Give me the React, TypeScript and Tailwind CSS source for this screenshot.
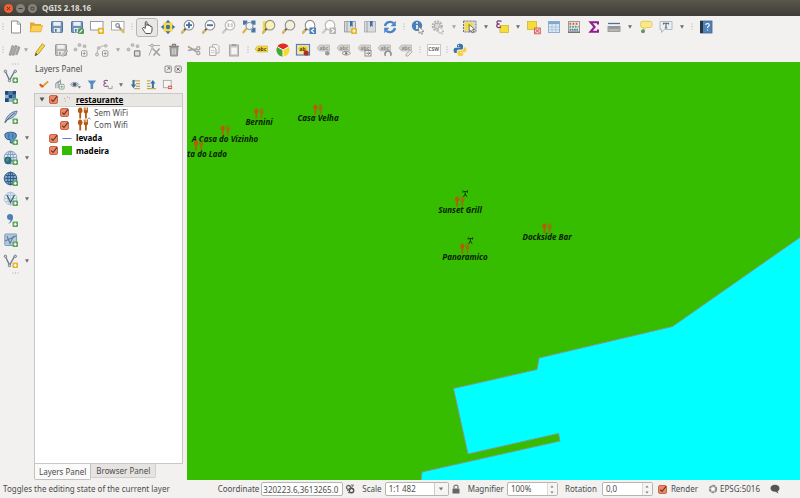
import React from "react";

type Kids = { children?: React.ReactNode };

/* ---------- shared pieces ---------- */

function Svg({ children }: Kids) {
  return (
    <svg viewBox="0 0 16 16" className="h-4 w-4 shrink-0" fill="none" aria-hidden="true">
      {children}
    </svg>
  );
}

function Tool({ label, active, children }: Kids & { label: string; active?: boolean }) {
  return (
    <button
      type="button"
      aria-label={label}
      aria-pressed={active}
      className={
        active
          ? "flex h-[19px] min-w-0 flex-1 items-center justify-center rounded-[3px] border border-[#b9b6b2] bg-[#e9e7e5]"
          : "flex h-[19px] min-w-0 flex-1 items-center justify-center"
      }
    >
      <Svg>{children}</Svg>
    </button>
  );
}

function Arrow({ narrow, light }: { narrow?: boolean; light?: boolean }) {
  return (
    <button
      type="button"
      aria-label="More options"
      className={narrow ? "flex w-2 shrink-0 justify-center" : "flex w-3 shrink-0 justify-center"}
    >
      <svg viewBox="0 0 6 4" className="h-1 w-1.5" aria-hidden="true">
        <path d="M1 0.3H5L3 3.7Z" fill={light ? "#a5a3a0" : "#6f6d6a"} />
      </svg>
    </button>
  );
}

function Grip({ small }: { small?: boolean }) {
  return (
    <div className={small ? "flex w-1.5 shrink-0 justify-center" : "flex w-2 shrink-0 justify-center"}>
      <svg viewBox="0 0 4 8" className="h-2 w-1" aria-hidden="true">
        <path d="M1 1H3M1 3.5H3M1 6H3" stroke="#cfccc8" strokeWidth="1" />
      </svg>
    </div>
  );
}

/* Small green or yellow "add" badge in the lower right corner. */
function Plus({ color = "#5aa35a" }: { color?: string }) {
  return (
    <g>
      <rect x="9.5" y="9.5" width="5.5" height="5.5" rx="1" fill={color} />
      <path d="M12.25 10.7v3.1M10.7 12.25h3.1" stroke="#fff" strokeWidth="1.2" />
    </g>
  );
}

function Lens({ fill = "#fdfdfd", muted }: { fill?: string; muted?: boolean }) {
  return (
    <g>
      <path d="M5.6 9.8L2 13.6" stroke={muted ? "#b9b7b4" : "#5b5b5b"} strokeWidth="2" strokeLinecap="round" />
      <path d="M3.8 11.6L1.8 13.8" stroke={muted ? "#cfcdca" : "#e9c33c"} strokeWidth="1.6" strokeLinecap="round" />
      <circle cx="9" cy="6.2" r="4.8" fill={fill} stroke={muted ? "#b5b3b0" : "#8d8d8d"} strokeWidth="1.1" />
    </g>
  );
}

function Floppy({ color, edge }: { color: string; edge: string }) {
  return (
    <g>
      <rect x="2.5" y="2.5" width="11" height="11" rx="0.8" fill={color} stroke={edge} />
      <rect x="4.3" y="2.8" width="7.4" height="4" fill="#eef0f2" />
      <rect x="4.8" y="9" width="6.4" height="4.4" fill="#e3e6e9" />
      <rect x="6" y="10" width="1.6" height="2.8" fill={edge} />
    </g>
  );
}

function Nodes() {
  return (
    <g fill="#c4c2bf" stroke="#a09e9b" strokeWidth="0.6">
      <circle cx="2.5" cy="7.5" r="1.5" />
      <circle cx="6.5" cy="3" r="1.5" />
      <circle cx="11.5" cy="4.2" r="1.5" />
    </g>
  );
}

function GreyPlus() {
  return (
    <g>
      <rect x="8.5" y="8.8" width="5.4" height="5.4" rx="0.8" fill="#fff" stroke="#9a9895" />
      <path d="M11.2 10v3M9.7 11.5h3" stroke="#9a9895" />
    </g>
  );
}

function Tag({ muted }: { muted?: boolean }) {
  return (
    <g>
      <path
        d="M1 6L3.5 3H13.5V9H3.5Z"
        fill={muted ? "#d5d3d0" : "#f4d742"}
        stroke={muted ? "#b3b1ae" : "#d7b82d"}
        strokeWidth="0.7"
      />
      <text
        x="3.6"
        y="7.8"
        fontSize="5"
        fontWeight="700"
        fontFamily="Noto Sans, sans-serif"
        fill={muted ? "#8c8a87" : "#4b431a"}
      >
        abc
      </text>
    </g>
  );
}

function Vee({ color = "#6f7d86" }: { color?: string }) {
  return (
    <g stroke={color}>
      <path d="M2.5 3.5L6.5 12.3L11.5 3.5H13" strokeWidth="1.4" />
      <circle cx="2.4" cy="3.3" r="1.2" fill="#cfe0ef" />
      <circle cx="6.5" cy="12.5" r="1.2" fill="#cfe0ef" />
      <circle cx="12.3" cy="3.3" r="1.2" fill="#cfe0ef" />
    </g>
  );
}

function Globe({ color = "#3d6f9e", fill = "#b9d0e4" }: { color?: string; fill?: string }) {
  return (
    <g stroke={color} strokeWidth="0.9">
      <circle cx="7.5" cy="7.5" r="6.3" fill={fill} />
      <ellipse cx="7.5" cy="7.5" rx="2.8" ry="6.3" />
      <path d="M1.5 7.5H13.5M2.6 4.5H12.4M2.6 10.5H12.4M7.5 1.5V13.5" />
    </g>
  );
}

function Check({ label, children }: Kids & { label?: string }) {
  return (
    <label className="flex items-center gap-1">
      <span className="grid h-[9px] w-[9px] shrink-0">
        <input
          type="checkbox"
          defaultChecked
          aria-label={label}
          className="col-start-1 row-start-1 h-[9px] w-[9px] appearance-none rounded-[2px] border border-[#c4694c] bg-white checked:bg-[#f08763] peer"
        />
        <svg
          viewBox="0 0 9 9"
          className="pointer-events-none col-start-1 row-start-1 hidden h-[9px] w-[9px] peer-checked:block"
          fill="none"
          aria-hidden="true"
        >
          <path d="M2.2 4.6L4 6.5L8 1.4" stroke="#54382f" strokeWidth="1.1" />
        </svg>
      </span>
      {children}
    </label>
  );
}

function Cutlery({ className, spoon = "#b5590f", fork = "#b5590f" }: { className: string; spoon?: string; fork?: string }) {
  return (
    <svg viewBox="0 0 12 12" className={className} aria-hidden="true">
      <path d="M3.2 0.5C4.8 0.5 5.5 2.2 5.5 3.5C5.5 4.8 4.9 5.7 4.1 6.1V11.5H2.3V6.1C1.5 5.7 0.9 4.8 0.9 3.5C0.9 2.2 1.6 0.5 3.2 0.5Z" fill={spoon} />
      <path d="M6.8 0.5H7.7V3.2H8.4V0.5H9.4V3.2H10.1V0.5H11V4.6C11 5.7 10.4 6.2 9.8 6.4V11.5H8V6.4C7.4 6.2 6.8 5.7 6.8 4.6Z" fill={fork} />
    </svg>
  );
}

/* ---------- window chrome ---------- */

function TitleBar() {
  return (
    <header className="flex h-4 items-center gap-[3px] bg-linear-to-b from-[#5a574e] to-[#3d3c37] pl-1">
      <button type="button" aria-label="Close" className="flex h-[9px] w-[9px] items-center justify-center rounded-full bg-[#ee5f35]">
        <svg viewBox="0 0 5 5" className="h-[5px] w-[5px]" aria-hidden="true">
          <path d="M1 1L4 4M4 1L1 4" stroke="#6b2a17" />
        </svg>
      </button>
      <button type="button" aria-label="Minimize" className="flex h-[9px] w-[9px] items-center justify-center rounded-full bg-[#85827a]">
        <svg viewBox="0 0 5 5" className="h-[5px] w-[5px]" aria-hidden="true">
          <path d="M0.5 2.5H4.5" stroke="#3d3c37" />
        </svg>
      </button>
      <button type="button" aria-label="Maximize" className="flex h-[9px] w-[9px] items-center justify-center rounded-full bg-[#85827a]">
        <svg viewBox="0 0 5 5" className="h-[5px] w-[5px]" fill="none" aria-hidden="true">
          <path d="M1 1.2H4V3.8H1Z" stroke="#3d3c37" strokeWidth="0.8" />
        </svg>
      </button>
      <h1 className="pl-0.5 text-[8px] leading-4 font-bold text-[#dfdbd2]">QGIS 2.18.16</h1>
    </header>
  );
}

function MainToolbar() {
  return (
    <div role="toolbar" aria-label="Main toolbar" className="flex h-[22px] items-center">
      <Grip small />
      <div className="flex w-[122px] items-center">
        <Tool label="New project">
          <path d="M3.5 2H9.5L12.5 5V14H3.5Z" fill="#fff" stroke="#8b8b8b" />
          <path d="M9.3 2V5.2H12.5" stroke="#8b8b8b" strokeWidth="0.8" />
        </Tool>
        <Tool label="Open project">
          <path d="M2 12.5V3.5H6L7 5H13V12.5Z" fill="#e2a92f" />
          <path d="M2 12.8L4 6.5H14.6L12.8 12.8Z" fill="#fbcf54" stroke="#e0ab35" strokeWidth="0.7" />
        </Tool>
        <Tool label="Save project"><Floppy color="#6e94bd" edge="#4f759e" /></Tool>
        <Tool label="Save project as">
          <Floppy color="#6e94bd" edge="#4f759e" />
          <rect x="9" y="9.5" width="6" height="5.5" rx="1" fill="#4e9a57" />
          <path d="M10.5 13.6L13.4 10.7" stroke="#fff" strokeWidth="1.1" />
        </Tool>
        <Tool label="New print composer">
          <rect x="1.5" y="2.5" width="12.5" height="8.5" fill="#fff" stroke="#9a9a9a" />
          <rect x="8.8" y="8.8" width="6.2" height="6.2" rx="1" fill="#e3b52a" />
          <path d="M11.9 10.2v3.4M10.2 11.9h3.4" stroke="#fff" strokeWidth="1.2" />
        </Tool>
        <Tool label="Composer manager">
          <rect x="1.5" y="2.5" width="12.5" height="8.5" fill="#fff" stroke="#a8a8a8" />
          <path d="M8.2 7.2L13.8 13.4" stroke="#8a8a8a" strokeWidth="2" />
          <path d="M11 10.2L14.2 13.8" stroke="#e5c445" strokeWidth="1.8" />
          <circle cx="7.6" cy="6.5" r="1.8" stroke="#8a8a8a" strokeWidth="1.2" />
        </Tool>
      </div>
      <Grip />
      <div className="flex w-[264px] items-center">
        <Tool label="Pan map" active>
          <path
            d="M6.3 9.3V3.4C6.3 2.2 8 2.2 8 3.4V6.6V5.8C8.2 4.8 9.8 5 9.8 6V7C10 6 11.5 6.2 11.5 7.2V7.9C11.8 7 13 7.3 13 8.3V11C13 12.5 12 14.5 11.5 14.5H6.8C6 13.5 4.5 11.3 3.6 9.9C3 8.9 4.4 8 5.2 8.8Z"
            fill="#fff"
            stroke="#3c3c3c"
            strokeWidth="0.9"
          />
        </Tool>
        <Tool label="Pan map to selection">
          <rect x="3.5" y="3.5" width="9" height="9" fill="#f3dc46" />
          <path d="M8 0.8L10.5 3.8H5.5ZM8 15.2L10.5 12.2H5.5ZM0.8 8L3.8 5.5V10.5ZM15.2 8L12.2 5.5V10.5Z" fill="#4a6f9c" />
          <circle cx="8" cy="8" r="2.2" fill="#4a6f9c" />
        </Tool>
        <Tool label="Zoom in">
          <Lens />
          <path d="M9 3.2V9.2M6 6.2H12" stroke="#3f6ea5" strokeWidth="1.8" />
        </Tool>
        <Tool label="Zoom out">
          <Lens />
          <path d="M6 6.2H12" stroke="#3f6ea5" strokeWidth="1.8" />
        </Tool>
        <Tool label="Zoom to native resolution">
          <Lens muted />
          <path d="M7.2 4.2V8.2M11 4.2V8.2M9 4.8V5.6M9 6.9V7.7" stroke="#9a9895" strokeWidth="0.9" />
        </Tool>
        <Tool label="Zoom full">
          <path d="M5.5 9.5L1.8 14" stroke="#d8b53c" strokeWidth="2" />
          <circle cx="8.5" cy="7" r="3.6" fill="#eef3f8" stroke="#8d8d8d" />
          <path d="M2 1.5H6.3V3.6L4.2 5.8H2ZM14.5 1.5H10.3V3.6L12.3 5.8H14.5ZM14.5 13.5H10.3V11L12.3 8.8H14.5Z" fill="#4a76a8" />
        </Tool>
        <Tool label="Zoom to selection">
          <rect x="1.8" y="2" width="7" height="9" fill="#f3dc46" />
          <Lens fill="#f9f1b5" />
        </Tool>
        <Tool label="Zoom to layer"><Lens fill="#f3f0dc" /></Tool>
        <Tool label="Zoom last">
          <Lens />
          <rect x="8.5" y="8.5" width="6.5" height="6.5" fill="#4f81b5" />
          <path d="M13 9.8L10.5 11.8L13 13.7" stroke="#fff" strokeWidth="1.2" />
        </Tool>
        <Tool label="Zoom next">
          <Lens muted />
          <rect x="8.5" y="8.5" width="6.5" height="6.5" fill="#b7b5b2" />
          <path d="M10.5 9.8L13 11.8L10.5 13.7" stroke="#fff" strokeWidth="1.2" />
        </Tool>
        <Tool label="New bookmark">
          <path d="M2.5 2.5H13.5V13H2.5Z" fill="#d9dcdf" stroke="#8d9297" strokeWidth="0.8" />
          <path d="M5 2.5V13" stroke="#8d9297" strokeWidth="0.8" />
          <path d="M8 2V8L9.3 6.8L10.6 8V2Z" fill="#3f6ea5" />
          <rect x="9" y="9" width="6" height="6" rx="1" fill="#e3b52a" />
          <path d="M12 10.3v3.4M10.3 12h3.4" stroke="#fff" strokeWidth="1.1" />
        </Tool>
        <Tool label="Show bookmarks">
          <path d="M2.5 2.5H13.5V13H2.5Z" fill="#d9dcdf" stroke="#a3a7ab" strokeWidth="0.8" />
          <path d="M5 2.5V13" stroke="#8d9297" strokeWidth="0.8" />
          <path d="M8 2V8L9.3 6.8L10.6 8V2Z" fill="#3f6ea5" />
        </Tool>
        <Tool label="Refresh">
          <path d="M3 7A5.2 5.2 0 0 1 11.5 4.2" stroke="#4a86c0" strokeWidth="2.4" />
          <path d="M13.8 1.8V7.2H8.6Z" fill="#4a86c0" />
          <path d="M13 9A5.2 5.2 0 0 1 4.5 11.8" stroke="#4a86c0" strokeWidth="2.4" />
          <path d="M2.2 14.2V8.8H7.4Z" fill="#4a86c0" />
        </Tool>
      </div>
      <Grip />
      <div className="flex w-10 items-center">
        <Tool label="Identify features">
          <circle cx="7" cy="6.8" r="5.2" fill="#4a80b8" />
          <path d="M7 6V10" stroke="#fff" strokeWidth="1.6" />
          <circle cx="7" cy="3.9" r="0.9" fill="#fff" />
          <path d="M8.5 7.5L14 12.4L11.7 12.6L12.7 14.8L11.5 15.2L10.5 13L9 14.4Z" fill="#fff" stroke="#777" strokeWidth="0.7" />
        </Tool>
        <Tool label="Run feature action">
          <circle cx="7.3" cy="7" r="4.6" stroke="#b3b1ae" strokeWidth="2" strokeDasharray="2 1" />
          <circle cx="7.3" cy="7" r="3" fill="#dcdad8" stroke="#aaa8a5" />
          <path d="M8.5 7.5L14 12.4L11.7 12.6L12.7 14.8L11.5 15.2L10.5 13L9 14.4Z" fill="#fff" stroke="#a9a7a4" strokeWidth="0.7" />
        </Tool>
      </div>
      <Arrow light />
      <div className="flex w-5 items-center">
        <Tool label="Select features">
          <rect x="1.5" y="2" width="12.5" height="11" fill="#d9d9d4" stroke="#747474" strokeDasharray="2 1" />
          <path d="M3 3.5H10.5V7.5L7 11.5H3Z" fill="#f6dd3b" />
          <path d="M7 5.5L12.8 10.4L10.5 10.7L11.8 13.2L10.4 13.8L9.2 11.4L7.4 12.8Z" fill="#fff" stroke="#555" strokeWidth="0.8" />
        </Tool>
      </div>
      <Arrow />
      <div className="flex w-5 items-center">
        <Tool label="Select by expression">
          <rect x="6" y="6.5" width="8.5" height="7" fill="#f6dd3b" stroke="#d3b62c" strokeWidth="0.8" />
          <path d="M7.5 2.3C5 1.2 2.5 2 3 3.8C3.2 4.8 4.5 5 5.6 5C3.8 5 2.3 5.8 2.8 7.4C3.3 9 5.8 8.8 7 7.8" stroke="#7a3d74" strokeWidth="1.3" />
        </Tool>
      </div>
      <Arrow />
      <div className="flex w-[100px] items-center">
        <Tool label="Deselect features">
          <rect x="1.5" y="2.5" width="9" height="8" fill="#f6dd3b" stroke="#d3b62c" strokeWidth="0.8" />
          <rect x="8.5" y="9" width="5.8" height="5.8" fill="#f3d0cb" stroke="#d5564b" strokeWidth="0.9" />
          <path d="M9.5 10L13.3 13.8M13.3 10L9.5 13.8" stroke="#d5564b" />
        </Tool>
        <Tool label="Open attribute table">
          <rect x="2.5" y="2.5" width="11" height="11" fill="#e3ebf3" stroke="#8db0d2" />
          <rect x="2.5" y="2.5" width="11" height="2.6" fill="#7fa8d0" />
          <path d="M6 5V13.5M9.8 5V13.5M3 8H13M3 10.8H13" stroke="#9fbcd8" strokeWidth="0.8" />
        </Tool>
        <Tool label="Open field calculator">
          <rect x="2.5" y="2.5" width="11" height="10.5" fill="#eceae6" stroke="#9b9791" />
          <path d="M2 13.3H14" stroke="#77736d" strokeWidth="1.4" />
          <path d="M3.5 4.8H12.5" stroke="#d9534a" strokeWidth="1.9" strokeDasharray="1.7 1.4" />
          <path d="M3.5 7.8H12.5" stroke="#59a75b" strokeWidth="1.9" strokeDasharray="1.7 1" />
          <path d="M3.5 10.8H12.5" stroke="#4d7fb5" strokeWidth="1.9" strokeDasharray="1.7 0.6" />
        </Tool>
        <Tool label="Show statistical summary">
          <path d="M12 5.5V3.2H4.5L8.6 8L4.5 12.8H12V10.5" stroke="#8d1f8e" strokeWidth="2" />
        </Tool>
        <Tool label="Measure line">
          <path d="M2 4.5H14" stroke="#4c7296" strokeWidth="1.3" />
          <rect x="2" y="7.5" width="12" height="4.8" fill="#b9b9b7" stroke="#858583" strokeWidth="0.8" />
          <path d="M4 8V10M6 8V10M8 8V10M10 8V10M12 8V10" stroke="#666" strokeWidth="0.8" />
        </Tool>
      </div>
      <Arrow />
      <div className="flex w-10 items-center">
        <Tool label="Map tips">
          <path d="M4 2.3H12.5C14.6 2.3 14.6 8.5 12.5 8.5H8L5.5 12L5.8 8.5H4C1.8 8.5 1.8 2.3 4 2.3Z" fill="#fbe889" stroke="#d9c04f" strokeWidth="0.8" />
          <circle cx="5" cy="12.3" r="2" fill="#5d9a5f" />
        </Tool>
        <Tool label="Text annotation">
          <path d="M2 2.5H14V10.5H6.5L3.5 13.5V10.5H2Z" fill="#eaf0f5" stroke="#a7b4bf" strokeWidth="0.9" />
          <path d="M5.5 5.5V4.2H10.5V5.5M8 4.2V8.8M6.8 9H9.2" stroke="#5f5f5f" strokeWidth="1.1" />
        </Tool>
      </div>
      <Arrow />
      <Grip />
      <div className="flex w-5 items-center">
        <Tool label="Help contents">
          <rect x="2.5" y="2" width="11.5" height="12" fill="#5183b8" stroke="#3b648f" strokeWidth="0.8" />
          <rect x="2" y="2" width="3" height="12" fill="#263645" />
          <path d="M7.8 6C7.8 4 11.2 4 11.2 6C11.2 7.4 9.5 7.4 9.5 9M9.5 10.4V11.6" stroke="#fff" strokeWidth="1.2" />
        </Tool>
      </div>
    </div>
  );
}

function EditToolbar() {
  return (
    <div role="toolbar" aria-label="Editing toolbar" className="flex h-6 items-center">
      <Grip small />
      <div className="flex w-4 items-center">
        <Tool label="Current edits">
          <path d="M3 13L6 3.5L8 4.2L5 13.4ZM6 13L9.3 3.2L11.3 4L8 13.4ZM9.5 12.5L12.3 4.5L14 5.3L11.2 12.8Z" fill="#a9a7a4" stroke="#8b8986" strokeWidth="0.6" />
        </Tool>
      </div>
      <Arrow narrow light />
      <div className="flex w-[82px] items-center">
        <Tool label="Toggle editing">
          <path d="M3 13.8L4 10L10.3 1.8L12.8 3.7L6.4 12Z" fill="#f4d73f" stroke="#a58f2c" strokeWidth="0.8" />
          <path d="M2.8 14.2L3.9 10.8L5.8 12.4Z" fill="#555" />
        </Tool>
        <Tool label="Save layer edits">
          <Floppy color="#b9b7b4" edge="#9a9895" />
          <path d="M8.5 13.5L13.5 7.8L15 9L10 14.6Z" fill="#cccac7" stroke="#959390" strokeWidth="0.6" />
        </Tool>
        <Tool label="Add feature"><Nodes /><GreyPlus /></Tool>
        <Tool label="Add circular string">
          <path d="M3 12.5C3 6.5 5.5 3.8 11.5 3.8" stroke="#b3b1ae" />
          <circle cx="3" cy="12.5" r="1.5" fill="#dddbd8" stroke="#a09e9b" strokeWidth="0.8" />
          <circle cx="4.8" cy="6" r="1.3" fill="#dddbd8" stroke="#a09e9b" strokeWidth="0.8" />
          <circle cx="11.8" cy="3.8" r="1.3" fill="#dddbd8" stroke="#a09e9b" strokeWidth="0.8" />
          <GreyPlus />
        </Tool>
      </div>
      <Arrow light />
      <div className="flex w-[120px] items-center">
        <Tool label="Move feature">
          <Nodes />
          <rect x="8.5" y="8.8" width="5.4" height="5.4" rx="0.8" fill="#e2e0dd" stroke="#858380" strokeWidth="1.2" />
        </Tool>
        <Tool label="Node tool">
          <path d="M2.5 3.5H14M7 3.5L3 13.5" stroke="#aeaca9" />
          <path d="M6.5 6.5L14 13.8M13.5 6.5L7.5 13.5" stroke="#a3a19e" strokeWidth="1.6" />
          <circle cx="6" cy="3.5" r="1.4" fill="#dddbd8" stroke="#a09e9b" strokeWidth="0.8" />
        </Tool>
        <Tool label="Delete selected">
          <path d="M4 5.2H12L11.3 14H4.7Z" fill="#a5a3a0" stroke="#858380" strokeWidth="0.9" />
          <path d="M3 4.3H13M6.5 4V2.5H9.5V4" stroke="#858380" strokeWidth="1.3" />
          <path d="M6.5 6.5V12.6M8 6.5V12.6M9.5 6.5V12.6" stroke="#e0dedb" strokeWidth="0.7" />
        </Tool>
        <Tool label="Cut features">
          <path d="M2 4.5L11 10M2 8.6L10.5 7" stroke="#a3a19e" strokeWidth="1.5" />
          <circle cx="12.3" cy="11" r="1.6" stroke="#a3a19e" strokeWidth="1.2" />
          <circle cx="12.3" cy="6.2" r="1.6" stroke="#a3a19e" strokeWidth="1.2" />
        </Tool>
        <Tool label="Copy features">
          <path d="M6.5 2.5H11L13 4.5V11H6.5Z" fill="#f5f4f2" stroke="#b9b7b4" />
          <path d="M3.5 5H8L10 7V13.5H3.5Z" fill="#f5f4f2" stroke="#aeaca9" />
          <path d="M5 8.5H8.5M5 10.5H8.5" stroke="#c9c7c4" strokeWidth="0.8" />
        </Tool>
        <Tool label="Paste features">
          <rect x="3.5" y="3" width="9" height="11" fill="#c9c7c4" stroke="#a9a7a4" />
          <rect x="5.3" y="5.5" width="5.6" height="6.8" fill="#f5f4f2" />
          <rect x="6" y="2" width="4" height="2" fill="#a3a19e" />
        </Tool>
      </div>
      <Grip />
      <div className="flex w-[164px] items-center">
        <Tool label="Layer labeling options">
          <g transform="translate(0 1)"><Tag /></g>
        </Tool>
        <Tool label="Layer diagram options">
          <circle cx="8" cy="8" r="6.5" fill="#f5d92f" />
          <path d="M8 8L2.4 4.7A6.5 6.5 0 0 1 13.6 4.7Z" fill="#e02b26" />
          <path d="M8 8L2.4 4.7A6.5 6.5 0 0 0 8 14.5Z" fill="#45a83c" />
          <path d="M8 14.5V8L2.4 4.7M8 8L13.6 4.7" stroke="#fff" />
        </Tool>
        <Tool label="Highlight pinned labels">
          <rect x="1.5" y="2.5" width="13" height="10.5" fill="#fbe9a0" stroke="#4f81c2" strokeWidth="1.2" />
          <path d="M3 6.5L4.5 4.3H12.5V9.5H4.5Z" fill="#f0cf35" />
          <text x="4.5" y="8.8" fontSize="5" fontWeight="700" fontFamily="Noto Sans, sans-serif" fill="#4b431a">ab</text>
          <circle cx="11.2" cy="11" r="2.6" fill="#b32a25" />
        </Tool>
        <Tool label="Pin labels">
          <Tag muted />
          <circle cx="11.3" cy="11.3" r="2.3" fill="#9c9a97" />
        </Tool>
        <Tool label="Show and hide labels">
          <Tag muted />
          <path d="M6 11.2C8 8.8 12.5 8.8 14.5 11.2C12.5 13.6 8 13.6 6 11.2Z" fill="#f5f4f2" stroke="#8f8d8a" />
          <circle cx="10.2" cy="11.2" r="1.2" fill="#777572" />
        </Tool>
        <Tool label="Move label">
          <Tag muted />
          <rect x="8" y="8.5" width="6" height="5.5" fill="#f5f4f2" stroke="#8f8d8a" />
          <path d="M9.3 11.2H12.6M11.4 9.8L12.8 11.2L11.4 12.6" stroke="#777572" />
        </Tool>
        <Tool label="Rotate label">
          <Tag muted />
          <path d="M8.5 13.8A3 3 0 1 1 13.5 13.8" stroke="#8f8d8a" strokeWidth="1.5" />
        </Tool>
        <Tool label="Change label">
          <Tag muted />
          <path d="M8 14V12L12.5 8L14.2 9.8L10 14Z" fill="#e9e7e4" stroke="#a3a19e" strokeWidth="0.8" />
        </Tool>
      </div>
      <Grip />
      <div className="flex w-5 items-center">
        <Tool label="Metasearch catalog">
          <rect x="1.5" y="2.5" width="13" height="11" fill="#fff" stroke="#c9c7c4" />
          <text x="2.3" y="8.8" fontSize="5" fontWeight="700" fontFamily="Noto Sans, sans-serif" fill="#666">CSW</text>
        </Tool>
      </div>
      <Grip small />
      <div className="flex w-5 items-center">
        <Tool label="Python console">
          <path d="M8 1.8C5.2 1.8 5 3 5 4V5.2H8.3V5.8H3.6C2.3 5.8 1.6 7 1.6 8.4C1.6 10 2.4 11 3.6 11H4.8V9.4C4.8 8.3 5.6 7.6 6.7 7.6H9.3C10.3 7.6 11 6.8 11 5.9V4C11 2.6 9.8 1.8 8 1.8Z" fill="#3a75a8" />
          <path d="M8.2 14.2C11 14.2 11.3 13 11.3 12V10.8H8V10.2H12.6C13.9 10.2 14.5 9 14.5 7.6C14.5 6 13.7 5.2 12.6 5.2H11.8V6.6C11.8 7.8 10.8 8.4 9.8 8.4H7C6 8.4 5.4 9.2 5.4 10V12C5.4 13.4 6.5 14.2 8.2 14.2Z" fill="#f6d044" />
          <circle cx="6.5" cy="3.7" r="0.6" fill="#fff" />
        </Tool>
      </div>
    </div>
  );
}

/* ---------- left side ---------- */

function SideRow({ label, arrow, children }: Kids & { label: string; arrow?: boolean }) {
  return (
    <div className="flex min-h-0 items-center pl-px">
      <div className="flex w-5 items-center">
        <Tool label={label}>{children}</Tool>
      </div>
      {arrow && <Arrow />}
    </div>
  );
}

function SideGrip() {
  return (
    <div className="flex h-1 items-center pl-3">
      <svg viewBox="0 0 8 4" className="h-1 w-2" aria-hidden="true">
        <path d="M1 1V3M3.5 1V3M6 1V3" stroke="#cfccc8" />
      </svg>
    </div>
  );
}

function SideToolbar() {
  return (
    <div role="toolbar" aria-label="Manage layers" aria-orientation="vertical" className="w-[34px] shrink-0">
      <SideGrip />
      <div className="grid h-[205px] grid-rows-10">
        <SideRow label="Add vector layer"><Vee /><Plus /></SideRow>
        <SideRow label="Add raster layer">
          <rect x="2" y="2" width="11" height="11" fill="#8fb1d3" />
          <path d="M2 2h3.7v3.7H2zM9.3 2H13v3.7H9.3zM5.7 5.7h3.6v3.6H5.7zM2 9.3h3.7V13H2z" fill="#234a73" />
          <path d="M5.7 2h3.6v3.7H5.7zM9.3 5.7H13v3.6H9.3z" fill="#4d7ba9" />
          <Plus />
        </SideRow>
        <SideRow label="Add SpatiaLite layer">
          <path d="M2 13.5C3 8 7 3 14 2C13.5 6.5 9.5 9.5 4.5 10.5Z" fill="#a9c4dc" stroke="#56738f" strokeWidth="0.9" />
          <path d="M2 13.8C5 9.5 8 6.5 12 3.8" stroke="#42607d" />
          <Plus />
        </SideRow>
        <SideRow label="Add PostGIS layer" arrow>
          <path d="M2 4C3.5 1.8 11 1.5 13 3.8C14.2 6 12.5 9 10.8 9.5L10 13H7.5L7 9.5H4.5C2.5 8.5 1.5 6 2 4Z" fill="#5f93c4" stroke="#2f5f8f" />
          <path d="M5.8 3.5V8.5M9.8 3.5V8.5" stroke="#2f5f8f" strokeWidth="0.8" />
          <Plus />
        </SideRow>
        <SideRow label="Add raster web layer" arrow>
          <Globe color="#7b9cba" fill="#dbe7f2" />
          <circle cx="5" cy="10.5" r="3.7" fill="#2f6a8a" />
          <path d="M3 9L5.5 8L6 10L4 12Z" fill="#4ba24e" />
          <Plus />
        </SideRow>
        <SideRow label="Add WCS layer"><Globe color="#2b5580" fill="#84a9cb" /><Plus /></SideRow>
        <SideRow label="Add WFS layer" arrow>
          <Globe color="#a9c2d9" fill="#e6eef5" />
          <path d="M4 4L7.5 11.5L11.5 4" stroke="#4d6377" strokeWidth="1.4" />
          <Plus />
        </SideRow>
        <SideRow label="Add delimited text layer">
          <circle cx="7" cy="5" r="3" fill="#4d7fb5" />
          <path d="M9.9 4.6C10.3 8 8.4 10.8 5 12C7 10 7.8 8.3 7.6 6.4Z" fill="#4d7fb5" />
          <Plus />
        </SideRow>
        <SideRow label="Add virtual layer">
          <rect x="1.8" y="2" width="11.8" height="11.5" rx="0.8" fill="#b3cade" stroke="#7f9cb6" />
          <path d="M4 4L7 11.5L10.5 4M2 9L13 4" stroke="#607d97" strokeWidth="1.1" />
          <Plus />
        </SideRow>
        <SideRow label="New shapefile layer" arrow><Vee /><Plus color="#e3b52a" /></SideRow>
      </div>
      <SideGrip />
    </div>
  );
}

function PanelButton({ label, children }: Kids & { label: string }) {
  return (
    <button type="button" aria-label={label} className="flex h-3 w-4 items-center justify-center">
      <svg viewBox="0 0 12 12" className="h-[11px] w-[11px]" fill="none" aria-hidden="true">{children}</svg>
    </button>
  );
}

function LayersPanel() {
  return (
    <section aria-label="Layers Panel" className="flex w-[149px] shrink-0 flex-col">
      <div className="flex h-3.5 items-center gap-0.5 pr-px pl-px">
        <h2 className="flex-1 text-[8px] leading-3">Layers Panel</h2>
        <button type="button" aria-label="Float panel" className="h-2 w-2">
          <svg viewBox="0 0 8 8" fill="none" aria-hidden="true">
            <rect x="1" y="1" width="6.3" height="6.3" rx="1" stroke="#8d8b88" />
            <path d="M2.8 5.4L5.4 2.8M3.6 2.6H5.6V4.6" stroke="#6b6966" strokeWidth="0.8" />
          </svg>
        </button>
        <button type="button" aria-label="Close panel" className="h-2 w-2">
          <svg viewBox="0 0 8 8" fill="none" aria-hidden="true">
            <rect x="1" y="1" width="6.3" height="6.3" rx="1" stroke="#8d8b88" />
            <path d="M2.6 2.6L5.7 5.7M5.7 2.6L2.6 5.7" stroke="#5b5956" />
          </svg>
        </button>
      </div>
      <div className="flex h-[17px] items-center pl-px">
        <PanelButton label="Open layer styling">
          <path d="M1 5.5L5 6.5L4 9.8L2.5 9Z" fill="#e8b93d" />
          <path d="M5 8L11 2.8" stroke="#d8a23a" strokeWidth="2" />
          <path d="M2 5.5L5.8 8.8" stroke="#d9482e" strokeWidth="1.8" />
        </PanelButton>
        <PanelButton label="Add group">
          <path d="M2 10V5L4.5 3V8M4.5 10V4L7 1.5V7" stroke="#8b9aa5" strokeWidth="1.2" />
          <rect x="5.8" y="5.8" width="5.2" height="5.2" rx="1" fill="#fff" stroke="#7e9c80" />
          <path d="M8.4 7V10M7 8.4H10" stroke="#6f9a72" strokeWidth="0.9" />
        </PanelButton>
        <PanelButton label="Manage layer visibility">
          <path d="M0.5 6C2.5 2.8 7.5 2.8 9.5 6C7.5 9.2 2.5 9.2 0.5 6Z" fill="#c5ced6" stroke="#7e8b95" strokeWidth="0.8" />
          <circle cx="5" cy="6" r="2" fill="#44617c" />
          <path d="M8.6 8H12L10.3 10.4Z" fill="#6f6d6a" />
        </PanelButton>
        <PanelButton label="Filter legend by map content">
          <path d="M1.8 1.5H11L7.8 5.8V10.8H5V5.8Z" fill="#5a8cc0" />
        </PanelButton>
        <PanelButton label="Filter legend by expression">
          <path d="M6.5 2C4 1 1.8 1.8 2.2 3.5C2.4 4.5 3.5 4.7 4.6 4.7C2.8 4.7 1.6 5.5 2 7C2.5 8.6 5 8.4 6.2 7.4" stroke="#8d5d88" strokeWidth="1.2" />
          <path d="M7 7.5V10.5H11V7.5" stroke="#9b9996" />
        </PanelButton>
        <Arrow />
        <PanelButton label="Expand all">
          <path d="M4.5 2H11M6.5 5H11M6.5 8H11M4.5 10.5H11" stroke="#c0a95e" strokeWidth="1.3" />
          <path d="M3.8 1V7" stroke="#3b6ea5" strokeWidth="2.2" />
          <path d="M0.9 6H6.7L3.8 10Z" fill="#3b6ea5" />
        </PanelButton>
        <PanelButton label="Collapse all">
          <path d="M1 2H5M1 5H4M1 8H5M1 10.5H11" stroke="#c0a95e" strokeWidth="1.3" />
          <path d="M7.5 4V9.8" stroke="#3b6ea5" strokeWidth="2.2" />
          <path d="M4.6 5H10.4L7.5 1Z" fill="#3b6ea5" />
        </PanelButton>
        <PanelButton label="Remove layer">
          <rect x="1.5" y="1.5" width="8.5" height="8" fill="#f7f6f5" stroke="#a9a7a4" />
          <rect x="6.5" y="7.3" width="4.5" height="3.7" fill="#e0564c" />
          <path d="M7.3 9.1H10.2" stroke="#fff" />
        </PanelButton>
      </div>
      <ul className="grid flex-1 content-start grid-rows-[63px] border border-[#cbc8c4] bg-white text-[8px] leading-3">
        <li className="grid grid-rows-5">
          <div className="flex items-center gap-1 border-b border-[#d5d2cf] bg-[#e9e7e4] pl-[3px]">
            <button type="button" aria-label="Collapse restaurante" className="flex w-[7px] justify-center">
              <svg viewBox="0 0 6 5" className="h-[5px] w-1.5" aria-hidden="true"><path d="M0.5 0.5H5.5L3 4.5Z" fill="#555" /></svg>
            </button>
            <Check label="restaurante">
              <svg viewBox="0 0 10 10" className="h-2.5 w-2.5" aria-hidden="true">
                <path d="M2 3.5h1M5 2h1M7 3h1M3 6h1" stroke="#d99a8a" />
              </svg>
              <span className="font-bold text-black underline">restaurante</span>
            </Check>
          </div>
          <div className="flex items-center pl-[25px]">
            <Check label="Sem WiFi">
              <span className="flex items-center gap-[5px] pl-1">
                <Cutlery className="h-3 w-3" />
                <span>Sem WiFi</span>
              </span>
            </Check>
          </div>
          <div className="flex items-center pl-[25px]">
            <Check label="Com Wifi">
              <span className="flex items-center gap-[5px] pl-1">
                <span className="relative">
                  <Cutlery className="h-3 w-3" />
                  <svg viewBox="0 0 4 3" className="absolute -top-0.5 -right-0.5 h-[3px] w-1" fill="none" aria-hidden="true">
                    <path d="M0.5 2.5L2 0.8L3.5 2.5" stroke="#777" strokeWidth="0.8" />
                  </svg>
                </span>
                <span>Com Wifi</span>
              </span>
            </Check>
          </div>
          <div className="flex items-center pl-3.5">
            <Check label="levada">
              <svg viewBox="0 0 10 10" className="h-2.5 w-2.5" aria-hidden="true"><path d="M0.5 5.5H9.5" stroke="#5b7be8" /></svg>
              <span className="font-bold text-black">levada</span>
            </Check>
          </div>
          <div className="flex items-center pl-3.5">
            <Check label="madeira">
              <span className="h-[9px] w-2.5 bg-[#36bd00]" />
              <span className="font-bold text-black">madeira</span>
            </Check>
          </div>
        </li>
      </ul>
      <div role="tablist" className="flex h-4 items-start text-[8px] leading-3">
        <button type="button" role="tab" aria-selected="true" className="h-4 rounded-b-[2px] border border-t-0 border-[#c5c2be] bg-[#fbfafa] px-1">
          Layers Panel
        </button>
        <button type="button" role="tab" aria-selected="false" className="h-3.5 rounded-b-[2px] border border-t-0 border-l-0 border-[#d2cfcb] bg-[#e6e4e2] px-[5px]">
          Browser Panel
        </button>
      </div>
    </section>
  );
}

/* ---------- map canvas ---------- */

const places = [
  { name: "Bernini", at: "left-[72px] top-[46px]" },
  { name: "Casa Velha", at: "left-[131px] top-[42px]" },
  { name: "A Casa do Vizinho", at: "left-[38px] top-[63px]" },
  { name: "ta do Lado", at: "left-5 top-[78px]", iconAt: "mr-4" },
  { name: "Sunset Grill", at: "left-[273px] top-[134px]", wifi: true },
  { name: "Dockside Bar", at: "left-[360px] top-[161px]" },
  { name: "Panoramico", at: "left-[278px] top-[181px]", wifi: true },
];

function MapCanvas() {
  return (
    <main aria-label="Map canvas" className="relative min-w-0 flex-1 overflow-hidden bg-[#36bd00]">
      <svg viewBox="0 0 613 418" preserveAspectRatio="xMinYMin slice" className="absolute inset-0 h-full w-full" aria-hidden="true">
        <path
          d="M615 174L485.5 264.5L352 296L350 307.5L266.5 326.5L281 392L371.5 371.5L373 379L235 410L234 420H615Z"
          fill="#00ffff"
          stroke="#7d9a93"
          strokeWidth="1"
        />
      </svg>
      {places.map((p) => (
        <div key={p.name} className={`absolute flex -translate-x-1/2 flex-col items-center ${p.at}`}>
          <div className={`relative ${p.iconAt ?? ""}`}>
            <Cutlery className="h-[11px] w-[11px]" spoon="#b85a08" fork="#9a7010" />
            {p.wifi && (
              <svg viewBox="0 0 6 7" className="absolute -top-1.5 left-2 h-[7px] w-1.5" fill="none" aria-hidden="true">
                <path d="M3 2V4M3 4L1.3 6.8M3 4L4.7 6.8M0.7 0.3V2.7M5.3 0.3V2.7M1.5 1.5H4.5" stroke="#12380a" />
              </svg>
            )}
          </div>
          <span className="-mt-0.5 text-[8px] leading-[10px] font-bold whitespace-nowrap text-[#0b1d04] italic">{p.name}</span>
        </div>
      ))}
    </main>
  );
}

/* ---------- status bar ---------- */

function Spin({ id, value }: { id: string; value: string }) {
  return (
    <span className="flex h-3.5 w-[51px] rounded-[2px] border border-[#b8b5b1] bg-white">
      <input id={id} defaultValue={value} className="w-0 min-w-0 flex-1 pl-[3px] outline-none" />
      <span className="flex w-2.5 flex-col border-l border-[#dcdad7] bg-[#f6f5f4]">
        <button type="button" aria-label="Increase" className="flex flex-1 items-center justify-center">
          <svg viewBox="0 0 4 3" className="h-[3px] w-1" aria-hidden="true"><path d="M0.5 2.5L2 0.5L3.5 2.5Z" fill="#777" /></svg>
        </button>
        <button type="button" aria-label="Decrease" className="flex flex-1 items-center justify-center">
          <svg viewBox="0 0 4 3" className="h-[3px] w-1" aria-hidden="true"><path d="M0.5 0.5L2 2.5L3.5 0.5Z" fill="#777" /></svg>
        </button>
      </span>
    </span>
  );
}

function StatusBar() {
  return (
    <footer className="flex h-[18px] shrink-0 items-center pr-5 pl-[3px] text-[8px] leading-3 whitespace-nowrap">
      <p className="min-w-0 flex-1">Toggles the editing state of the current layer</p>
      <label htmlFor="coord">Coordinate</label>
      <input id="coord" defaultValue="320223.6,3613265.0" className="ml-0.5 h-3.5 w-[82px] rounded-[2px] border border-[#b8b5b1] bg-white px-px outline-none" />
      <button type="button" aria-label="Toggle extents" className="ml-0.5 flex w-2.5 justify-center">
        <svg viewBox="0 0 10 10" className="h-2.5 w-2.5" fill="none" aria-hidden="true">
          <circle cx="3.5" cy="3.5" r="2" stroke="#666" strokeWidth="1.3" />
          <circle cx="6.5" cy="6.5" r="2.2" stroke="#4d4d4d" strokeWidth="1.4" />
          <path d="M2 7L8.5 1.5M6 1L8.8 1.2M3 8.5L4.5 9" stroke="#666" />
        </svg>
      </button>
      <label htmlFor="scale" className="ml-[7px]">Scale</label>
      <span className="ml-[3px] flex h-3.5 w-16 items-center rounded-[2px] border border-[#b8b5b1] bg-white">
        <select id="scale" className="w-0 min-w-0 flex-1 appearance-none pl-[3px] outline-none">
          <option>1:1 482</option>
        </select>
        <span className="flex h-full w-3.5 items-center justify-center border-l border-[#cfccc8] bg-[#f6f5f4]">
          <svg viewBox="0 0 6 4" className="h-1 w-1.5" aria-hidden="true"><path d="M0.8 0.5H5.2L3 3.5Z" fill="#777" /></svg>
        </span>
      </span>
      <button type="button" aria-label="Lock scale" className="ml-0.5 flex w-2.5 justify-center">
        <svg viewBox="0 0 8 10" className="h-2.5 w-2" fill="none" aria-hidden="true">
          <rect x="0.5" y="4.5" width="7" height="5" rx="0.5" fill="#666" />
          <path d="M2 4.5V2.8C2 0.6 6 0.6 6 2.8V4.5" stroke="#777" strokeWidth="1.2" />
        </svg>
      </button>
      <label htmlFor="magnifier" className="mr-[3px] ml-[7px]">Magnifier</label>
      <Spin id="magnifier" value="100%" />
      <label htmlFor="rotation" className="mr-[5px] ml-[7px]">Rotation</label>
      <Spin id="rotation" value="0,0" />
      <span className="ml-[5px]"><Check><span>Render</span></Check></span>
      <button type="button" className="ml-2.5 flex items-center gap-0.5">
        <svg viewBox="0 0 10 10" className="h-2.5 w-2.5" fill="none" aria-hidden="true">
          <circle cx="5" cy="5" r="3.3" fill="#d9d7d4" stroke="#8b8986" strokeWidth="1.8" strokeDasharray="3 0.6" />
          <circle cx="5" cy="5" r="1.6" fill="#fff" />
        </svg>
        <span>EPSG:5016</span>
      </button>
      <button type="button" aria-label="Messages" className="ml-2.5">
        <svg viewBox="0 0 10 10" className="h-2.5 w-2.5" aria-hidden="true">
          <path d="M5 0.8C7.6 0.8 9.5 2.3 9.5 4.3C9.5 5.8 8.7 6.8 7.5 7.3L8.5 9.5L5.5 7.8C2.4 7.9 0.5 6.3 0.5 4.3C0.5 2.3 2.4 0.8 5 0.8Z" fill="#555" />
        </svg>
      </button>
    </footer>
  );
}

export default function App() {
  return (
    <div className="flex h-screen flex-col overflow-hidden bg-[#f2f1f0] font-['Noto_Sans','Open_Sans',sans-serif] text-[#4c4c4c]">
      <TitleBar />
      <MainToolbar />
      <EditToolbar />
      <div className="flex min-h-0 flex-1">
        <SideToolbar />
        <LayersPanel />
        <div className="w-1 shrink-0" />
        <MapCanvas />
      </div>
      <StatusBar />
    </div>
  );
}
